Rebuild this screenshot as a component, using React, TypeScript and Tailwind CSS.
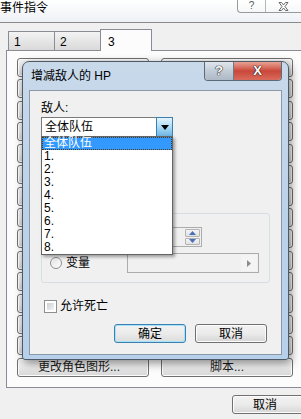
import React from 'react';

const items = ['全体队伍', '1.', '2.', '3.', '4.', '5.', '6.', '7.', '8.'];

const WinButton: React.FC<{ label?: string; className?: string }> = ({ label, className = '' }) => (
  <div
    className={`flex items-center justify-center rounded-[3px] border border-[#707070] bg-gradient-to-b from-[#f2f2f2] via-[#ebebeb] to-[#d6d6d6] shadow-[inset_0_0_0_1px_#fcfcfc] ${className}`}
  >
    {label}
  </div>
);

const BackgroundWindow: React.FC = () => (
  <div className="flex h-full flex-col">
    {/* title bar */}
    <div className="flex h-[23px] items-start justify-between border-b border-[#8a8a8a] bg-gradient-to-b from-white via-[#f7f8fa] to-[#eef1f5]">
      <span className="pt-[1px] text-[12px] leading-[14px]">事件指令</span>
      <div className="flex h-[13px] rounded-bl-[4px] border-b border-l border-[#9a9a9a]">
        <div className="flex w-[28px] items-center justify-center border-r border-[#b5b5b5] text-[10px] leading-[12px] text-[#5a5a5a]">?</div>
        <div className="flex w-[35px] items-center justify-center">
          <svg width="11" height="9" viewBox="0 0 11 9">
            <path d="M1 0.5h2.5L5.5 3l2-2.5H10L7 4.5l3 4H7.5L5.5 6l-2 2.5H1l3-4z" fill="#fff" stroke="#5a5a5a" strokeWidth="0.9" />
          </svg>
        </div>
      </div>
    </div>

    {/* tabs */}
    <div className="relative z-10 ml-[8px] mt-[6px] flex items-end">
      <div className="flex h-[19px] w-[47px] items-center border border-b-0 border-[#898c95] bg-gradient-to-b from-[#f3f3f3] to-[#d9d9d9] pl-[5px] pt-[2px]">1</div>
      <div className="-ml-px flex h-[19px] w-[47px] items-center border border-b-0 border-[#898c95] bg-gradient-to-b from-[#f3f3f3] to-[#d9d9d9] pl-[5px] pt-[2px]">2</div>
      <div className="-mb-px -ml-px flex h-[22px] w-[52px] items-start border border-b-0 border-[#898c95] bg-[#fcfcfc] pl-[7px] pt-[3px]">3</div>
    </div>

    {/* tab panel */}
    <div className="ml-[6px] h-[338px] w-[310px] border border-[#898c95] bg-[#fcfcfc] pl-[10px] pt-[7px]">
      <div className="grid w-[276px] grid-cols-2 gap-x-[12px] gap-y-[2.43px]">
        {Array.from({ length: 14 }).map((_, i) => (
          <React.Fragment key={i}>
            <WinButton className="h-[19px]" />
            <WinButton className="h-[19px]" />
          </React.Fragment>
        ))}
        <WinButton className="h-[19px] pr-[8px] text-[#1a1a1a]" label="更改角色图形..." />
        <WinButton className="h-[19px] text-[#1a1a1a]" label="脚本..." />
      </div>
    </div>

    {/* bottom buttons */}
    <div className="pl-[232px] pt-[7px]">
      <WinButton className="h-[19px] w-[80px] pr-[14px]" label="取消" />
    </div>
  </div>
);

const Dialog: React.FC = () => (
  <div className="absolute left-[22px] top-[61px] h-[299px] w-[267px] rounded-t-[7px] rounded-b-[3px] border border-[#4f5a66] bg-gradient-to-b from-[#c8d9ea] via-[#bcd2e9] to-[#b7d0eb] shadow-[2px_3px_10px_rgba(0,0,0,0.45)]">
    {/* caption */}
    <div className="flex h-[28px] items-start justify-between pl-[8px] pr-[6px]">
      <span className="pt-[7px] text-[12px] leading-[14px]">增减敌人的 HP</span>
      <div className="flex h-[19px] overflow-hidden rounded-b-[4px] border border-t-0 border-[#5c6b7a]">
        <div className="flex w-[29px] items-center justify-center border-r border-[#6b7a8a] bg-gradient-to-b from-[#e1e6ec] via-[#c2ccd7] to-[#aeb9c6] text-[13px] font-bold text-white [text-shadow:0_0_1px_#222,0_0_1px_#222,0_0_1px_#222]">?</div>
        <div className="flex w-[47px] items-center justify-center bg-gradient-to-b from-[#e8a294] via-[#c9473a] to-[#d96b5c] text-[13px] font-bold text-white [text-shadow:0_0_1px_#222,0_0_1px_#222,0_0_1px_#222]">X</div>
      </div>
    </div>

    {/* client area */}
    <div className="relative mx-[6px] h-[265px] border border-[#8a98a8] bg-[#f0f0f0] pl-[11px]">
      <div className="pt-[10px] text-[12px] leading-[14px]">敌人:</div>
      <div className="mt-[2px] flex h-[20px] w-[132px]">
        <div className="flex flex-1 items-center border border-[#7a7a7a] border-r-0 bg-white pl-[3px] text-[12px]">全体队伍</div>
        <div className="flex w-[17px] items-center justify-center border border-[#3c7fb1] bg-gradient-to-b from-[#e5f4fc] via-[#a9dbf6] to-[#6fb6e3]">
          <svg width="8" height="5" viewBox="0 0 8 5">
            <path d="M0 0h8L4 5z" fill="#000" />
          </svg>
        </div>
      </div>

      {/* group box */}
      <div className="mt-[76px] h-[70px] w-[229px] rounded-[3px] border border-[#d5dfe5] pl-[8px] pt-[13px]">
        <div className="flex items-center">
          <div className="h-[12px] w-[12px] rounded-full border border-[#8f8f8f] bg-gradient-to-br from-[#e9e9e9] to-white" />
          <span className="ml-[4px] w-[61px]">常量</span>
          <div className="flex h-[20px] w-[75px] border border-[#acacac] bg-[#f0f0f0]">
            <div className="flex-1" />
            <div className="flex w-[17px] flex-col gap-[1px] p-[1px]">
              <div className="flex flex-1 items-center justify-center rounded-[1px] border border-[#b4b4b4] bg-gradient-to-b from-[#f4f4f4] to-[#e1e1e1]">
                <svg width="7" height="4" viewBox="0 0 7 4"><path d="M0 4h7L3.5 0z" fill="#4a6fb8" /></svg>
              </div>
              <div className="flex flex-1 items-center justify-center rounded-[1px] border border-[#b4b4b4] bg-gradient-to-b from-[#f4f4f4] to-[#e1e1e1]">
                <svg width="7" height="4" viewBox="0 0 7 4"><path d="M0 0h7L3.5 4z" fill="#4a6fb8" /></svg>
              </div>
            </div>
          </div>
        </div>
        <div className="mt-[6px] flex items-center">
          <div className="h-[12px] w-[12px] rounded-full border border-[#8f8f8f] bg-gradient-to-br from-[#dcdcdc] via-[#f0f0f0] to-white shadow-[inset_0_0_0_1px_#f6f6f6]" />
          <span className="ml-[4px] w-[61px] text-[12px] leading-[14px]">变量</span>
          <div className="flex h-[20px] w-[132px] border border-[#acacac] bg-[#f0f0f0]">
            <div className="flex-1" />
            <div className="m-[1px] flex w-[16px] items-center justify-center bg-[#f4f4f4]">
              <svg width="4" height="7" viewBox="0 0 4 7"><path d="M0 0v7l4-3.5z" fill="#8c8c8c" /></svg>
            </div>
          </div>
        </div>
      </div>

      {/* checkbox */}
      <div className="mt-[16px] flex items-center pl-[3px]">
        <div className="h-[13px] w-[13px] border border-[#8f8f8f] bg-white p-[2px]">
          <div className="h-full w-full bg-gradient-to-br from-[#cbcfd5] to-[#f4f4f4]" />
        </div>
        <span className="ml-[3px] text-[12px] leading-[14px]">允许死亡</span>
      </div>

      {/* buttons */}
      <div className="mt-[11px] flex justify-end gap-[9px] pr-[14px]">
        <div className="flex h-[19px] w-[72px] items-center justify-center rounded-[3px] border border-[#3c7fb1] bg-gradient-to-b from-[#f2f2f2] via-[#ebebeb] to-[#dcdcdc] shadow-[inset_0_0_0_1px_#a6e3fa] text-[12px]">确定</div>
        <WinButton className="h-[19px] w-[72px] text-[12px]" label="取消" />
      </div>

      {/* open dropdown list */}
      <div className="absolute left-[11px] top-[45px] w-[132px] border border-[#646464] bg-white shadow-[2px_2px_3px_rgba(0,0,0,0.35)]">
        {items.map((item, i) => (
          <div
            key={item}
            className={
              i === 0
                ? 'flex h-[13px] items-center border border-dotted border-[#4a3a1a] bg-[#3399ff] pl-[1px] text-[12px] leading-[13px] text-white'
                : 'flex h-[13px] items-center pl-[2px] text-[12px] leading-[13px]'
            }
          >
            {item}
          </div>
        ))}
      </div>
    </div>
  </div>
);

export default function App() {
  return (
    <div className="relative h-[419px] w-[301px] overflow-hidden bg-[#f0f0f0] font-['Liberation_Sans','Noto_Sans_CJK_SC',sans-serif] text-[12px] text-black">
      <BackgroundWindow />
      <Dialog />
    </div>
  );
}
